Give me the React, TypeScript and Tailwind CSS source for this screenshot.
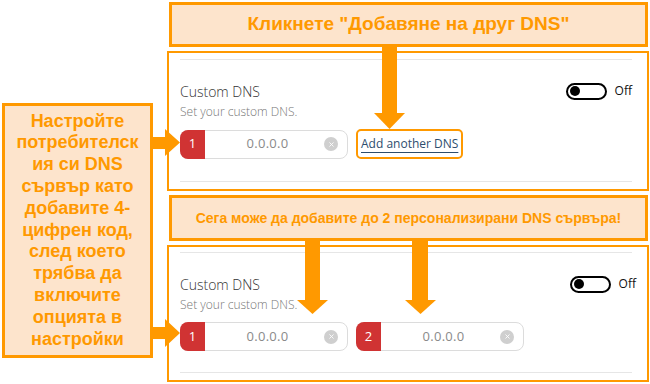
import { X } from "lucide-react";

const calloutText = "font-['Liberation_Sans',Arial,sans-serif] font-bold text-[#ff9900]";

function Toggle() {
  return (
    <div className="flex items-center">
      <div className="flex h-[17px] w-[41px] items-center rounded-full border-2 border-black px-[2px]">
        <div className="h-[10px] w-[10px] rounded-full bg-black" />
      </div>
      <span className="ml-[8px] text-[12px] text-[#111]">Off</span>
    </div>
  );
}

function DnsInput({ n }: { n: number }) {
  return (
    <div className="flex h-[29px] w-[168px] shrink-0 items-stretch rounded-[8px] border border-[#dcdcdc] bg-white">
      <div className="-my-px -ml-px flex w-[25px] items-center justify-center rounded-l-[8px] bg-[#d03333] text-[13px] text-white">
        {n}
      </div>
      <div className="flex flex-1 items-center justify-center pl-[6px] text-[13px] tracking-[0.3px] text-[#8a8a8a]">
        0.0.0.0
      </div>
      <div className="flex items-center pr-[9px]">
        <div className="flex h-[14px] w-[14px] items-center justify-center rounded-full bg-[#cfcfcf]">
          <X className="h-[7px] w-[7px] text-white" strokeWidth={3} />
        </div>
      </div>
    </div>
  );
}

function Panel({ second }: { second?: boolean }) {
  return (
    <div
      className={
        "flex w-[482px] flex-col border-2 border-[#ff9900] bg-white pl-[11px] pr-[15px] " +
        (second ? "h-[137px] pt-[5px]" : "h-[140px] pt-[6px]")
      }
    >
      <div className="h-px w-[452px] bg-[#e6e6e6]" />
      <div className="mt-[21px] flex h-[20px] items-center justify-between">
        <span className="text-[14px] font-light text-[#333]">Custom DNS</span>
        <div className={second ? "mr-[-4px]" : ""}>
          <Toggle />
        </div>
      </div>
      <div className="mt-[3px] text-[12px] font-light leading-[16px] text-[#777]">
        Set your custom DNS.
      </div>
      <div className="mt-[9px] flex items-center gap-[8px]">
        <DnsInput n={1} />
        {second ? (
          <DnsInput n={2} />
        ) : (
          <a className="flex h-[30px] items-center rounded-[5px] border-2 border-[#ff9900] px-[3px] text-[12px] text-[#2d4d6e] underline underline-offset-[4px]">
            Add another DNS
          </a>
        )}
      </div>
      <div className="mt-auto mb-[7px] h-px w-[452px] bg-[#e6e6e6]" />
    </div>
  );
}

function Arrows() {
  return (
    <svg
      className="pointer-events-none absolute left-0 top-0"
      width={650}
      height={384}
      viewBox="0 0 650 384"
    >
      <g fill="#ff9900">
        {/* top callout -> link */}
        <rect x={382} y={47} width={15} height={67} />
        <polygon points="374,113 405,113 389.5,129" />
        {/* middle callout -> inputs */}
        <rect x={305} y={241} width={15} height={60} />
        <polygon points="297,300 328,300 312.5,314" />
        <rect x={412} y={241} width={16} height={60} />
        <polygon points="405,300 436,300 420.5,314" />
        {/* left callout -> inputs */}
        <rect x={152} y={137} width={14} height={12} />
        <polygon points="165,129 165,156 180,142.5" />
        <rect x={152} y={327} width={14} height={12} />
        <polygon points="165,319 165,347 180,333" />
      </g>
    </svg>
  );
}

export default function App() {
  return (
    <div className="relative flex h-[384px] w-[650px] overflow-hidden bg-white font-['Open_Sans',sans-serif]">
      <div className="w-[167px] shrink-0 pl-[2px] pt-[103px]">
        <div
          className={
            "flex h-[255px] w-[151px] items-center justify-center border-[3px] border-[#ff9900] bg-[#fde4cc] text-center text-[18px] leading-[21.8px] " +
            calloutText
          }
        >
          <p>
            Настройте
            <br />
            потребителск
            <br />
            ия си DNS
            <br />
            сървър като
            <br />
            добавите 4-
            <br />
            цифрен код,
            <br />
            след което
            <br />
            трябва да
            <br />
            включите
            <br />
            опцията в
            <br />
            настройки
          </p>
        </div>
      </div>
      <div className="flex flex-col pt-[2px]">
        <div
          className={
            "ml-[2px] flex h-[45px] w-[479px] items-center justify-center border-[3px] border-[#ff9900] bg-[#fde4cc] text-[19px] " +
            calloutText
          }
        >
          Кликнете "Добавяне на друг DNS"
        </div>
        <div className="mt-[4px]">
          <Panel />
        </div>
        <div
          className={
            "ml-[2px] mt-[4px] flex h-[46px] w-[479px] items-center justify-center border-[3px] border-[#ff9900] bg-[#fde4cc] text-[14px] " +
            calloutText
          }
        >
          Сега може да добавите до 2 персонализирани DNS сървъра!
        </div>
        <div className="mt-[4px]">
          <Panel second />
        </div>
      </div>
      <Arrows />
    </div>
  );
}
